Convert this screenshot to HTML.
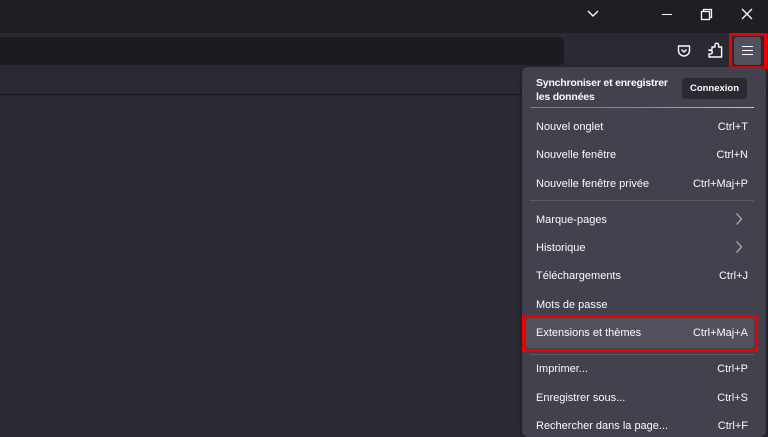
<!DOCTYPE html>
<html><head><meta charset="utf-8"><style>
*{margin:0;padding:0;box-sizing:border-box}
body{width:768px;height:432px;overflow:hidden;background:#2b2a33;font-family:"Liberation Sans",sans-serif;position:relative;color:#fbfbfe}
.a{position:absolute}
.it{position:absolute;left:536px;width:212px;font-size:11px;display:flex;justify-content:space-between;line-height:14px}
.sep{position:absolute;left:530px;width:224px;height:1px;background:#5b5b66}
</style></head><body>
<div class="a" style="left:0;top:0;width:768px;height:33px;background:#1f1e25"></div>
<svg class="a" style="left:586px;top:9px" width="14" height="10"><path d="M2 2 L7 7 L12 2" stroke="#fbfbfe" stroke-width="1.4" fill="none"/></svg>
<div class="a" style="left:662px;top:14px;width:10px;height:1.3px;background:#fbfbfe"></div>
<svg class="a" style="left:700px;top:8px" width="13" height="13"><rect x="1.5" y="3.5" width="8" height="8" stroke="#fbfbfe" fill="none" stroke-width="1.3"/><path d="M3.5 3.5V1.5H11.5V9.5H9.5" stroke="#fbfbfe" fill="none" stroke-width="1.3"/></svg>
<svg class="a" style="left:741px;top:8px" width="12" height="12"><path d="M1 1L11 11M11 1L1 11" stroke="#fbfbfe" stroke-width="1.3"/></svg>
<div class="a" style="left:0;top:33px;width:768px;height:61px;background:#2b2a33"></div>
<div class="a" style="left:0;top:37px;width:564px;height:28px;background:#1c1b22;border-radius:0 4px 4px 0"></div>
<div class="a" style="left:0;top:94px;width:768px;height:1px;background:#17161c"></div>
<svg class="a" style="left:676px;top:43px" width="16" height="16"><path d="M2.5 3h11v4.5a5.5 5.5 0 0 1-11 0z" stroke="#fbfbfe" stroke-width="1.4" fill="none" stroke-linejoin="round"/><path d="M5.5 6.5L8 9l2.5-2.5" stroke="#fbfbfe" stroke-width="1.4" fill="none"/></svg>
<svg class="a" style="left:706px;top:41px" width="18" height="20"><path d="M3 9h3v-3h3v-2a1.8 1.8 0 0 1 3.6 0v2h3v10h-12.6v-3h1.5a1.8 1.8 0 0 0 0-3.6h-1.5z" stroke="#fbfbfe" stroke-width="1.4" fill="none" stroke-linejoin="round"/></svg>
<div class="a" style="left:729px;top:33px;width:38px;height:36px;border:3px solid #e00;"></div>
<div class="a" style="left:734px;top:37px;width:27px;height:28px;background:#52525e;border-radius:3px"></div>
<div class="a" style="left:742px;top:46px;width:11px;height:1px;background:#fbfbfe;box-shadow:0 4px 0 #fbfbfe,0 8px 0 #fbfbfe"></div>
<div class="a" style="left:522px;top:67px;width:244px;height:370px;background:#42414d;border-radius:6px;box-shadow:0 1px 4px rgba(0,0,0,.5)"></div>
<div class="a" style="left:536px;top:76px;font-size:10.5px;letter-spacing:-0.2px;line-height:14px;font-weight:bold;white-space:nowrap">Synchroniser et enregistrer<br>les données</div>
<div class="a" style="left:682px;top:78px;width:65px;height:21px;background:#2b2a33;border-radius:4px;font-size:9.5px;font-weight:bold;text-align:center;line-height:21px">Connexion</div>
<div class="a" style="left:530px;top:107px;width:224px;height:1px;background:linear-gradient(90deg,#9059ff,#ff4aa2,#ffbd4f)"></div>
<div class="it" style="top:120px"><span>Nouvel onglet</span><span>Ctrl+T</span></div>
<div class="it" style="top:148px"><span>Nouvelle fenêtre</span><span>Ctrl+N</span></div>
<div class="it" style="top:177px"><span>Nouvelle fenêtre privée</span><span>Ctrl+Maj+P</span></div>
<div class="sep" style="top:200px"></div>
<div class="it" style="top:213px"><span>Marque-pages</span></div>
<svg class="a" style="left:735px;top:212px" width="8" height="14"><path d="M1.5 1.5L6.5 7L1.5 12.5" stroke="#b0b0b8" stroke-width="1.3" fill="none"/></svg>
<div class="it" style="top:241px"><span>Historique</span></div>
<svg class="a" style="left:735px;top:240px" width="8" height="14"><path d="M1.5 1.5L6.5 7L1.5 12.5" stroke="#b0b0b8" stroke-width="1.3" fill="none"/></svg>
<div class="it" style="top:269px"><span>Téléchargements</span><span>Ctrl+J</span></div>
<div class="it" style="top:298px"><span>Mots de passe</span></div>
<div class="a" style="left:526px;top:318px;width:228px;height:30px;background:#52525e;border-radius:4px"></div>
<div class="a" style="left:522px;top:315px;width:236px;height:37px;border:3px solid #e00"></div>
<div class="it" style="top:326px"><span>Extensions et thèmes</span><span>Ctrl+Maj+A</span></div>
<div class="sep" style="top:354px"></div>
<div class="it" style="top:362px"><span>Imprimer...</span><span>Ctrl+P</span></div>
<div class="it" style="top:391px"><span>Enregistrer sous...</span><span>Ctrl+S</span></div>
<div class="it" style="top:419px"><span>Rechercher dans la page...</span><span>Ctrl+F</span></div>
</body></html>
